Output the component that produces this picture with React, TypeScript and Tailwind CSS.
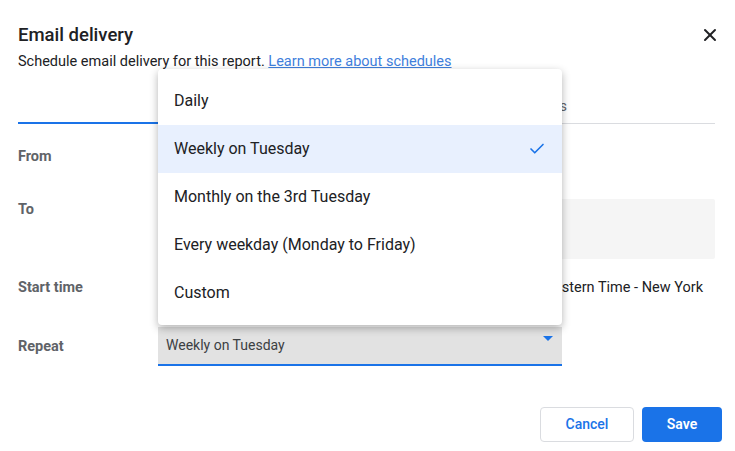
import { Check, X } from 'lucide-react';

const options = ['Daily', 'Weekly on Tuesday', 'Monthly on the 3rd Tuesday', 'Every weekday (Monday to Friday)', 'Custom'];

const Label = ({ children }: { children: string }) => (
    <div className="w-[140px] shrink-0 text-[14.5px] font-bold text-[#5f6368]">{children}</div>
);

export default function App() {
    const selected = 'Weekly on Tuesday';

    return (
        <div className="relative h-[451px] w-[735px] overflow-hidden bg-white font-['Roboto',sans-serif] text-[#202124]">
            <div className="flex flex-col pl-[18px] pr-[20px] pt-[24px]">
                {/* header */}
                <div className="flex items-center justify-between">
                    <h1 className="text-[18.5px] leading-[22px] font-medium">Email delivery</h1>
                    <button className="-mr-[5px] text-[#202124]">
                        <X size={20} strokeWidth={2.4} />
                    </button>
                </div>
                <p className="mt-[6px] text-[14.5px] leading-[20px]">
                    Schedule email delivery for this report.{' '}
                    <a className="text-[#3f7fdc] underline">Learn more about schedules</a>
                </p>

                {/* tabs */}
                <div className="mt-[18px] flex h-[34px] w-[697px] border-b border-[#dadce0]">
                    <div className="-mb-px w-[352px] border-b-2 border-[#1a73e8] text-center text-[14.5px] leading-[34px] text-[#1a73e8]">
                        Schedule
                    </div>
                    <div className="w-[200px] pr-[3px] text-right text-[14.5px] leading-[34px] text-[#5f6368]">
                        Existing schedules
                    </div>
                </div>

                {/* form */}
                <div className="mt-[17px] flex h-[32px] items-center">
                    <Label>From</Label>
                    <div className="text-[14.5px]">reports@example.com</div>
                </div>
                <div className="mt-[26px] flex items-start">
                    <Label>To</Label>
                    <div className="h-[60px] w-[557px] rounded-[2px] bg-[#f5f5f5]" />
                </div>
                <div className="mt-[13px] flex h-[32px] items-center">
                    <Label>Start time</Label>
                    <div className="flex w-[557px] items-center justify-between pr-[12px] text-[14.5px]">
                        <span>9:00 AM</span>
                        <span>(GMT-05:00) Eastern Time - New York</span>
                    </div>
                </div>
                <div className="mt-[23px] flex items-center">
                    <Label>Repeat</Label>
                    <div className="relative flex h-[39px] w-[404px] items-center border-b-2 border-[#1a73e8] bg-[#e2e2e2] pl-[8px] text-[14px] text-[#3c4043]">
                        Weekly on Tuesday
                        <span className="absolute right-[9px] top-[9px] h-0 w-0 border-l-[5px] border-r-[5px] border-t-[5px] border-l-transparent border-r-transparent border-t-[#1a73e8]" />
                    </div>
                </div>

                {/* actions */}
                <div className="mt-[41px] flex justify-end gap-[8px]">
                    <button className="h-[35px] w-[94px] rounded-[4px] border border-[#dadce0] text-[14px] font-medium text-[#1a73e8]">
                        Cancel
                    </button>
                    <button className="-mr-[7px] h-[35px] w-[80px] rounded-[4px] bg-[#1a73e8] text-[14px] font-semibold text-white">
                        Save
                    </button>
                </div>
            </div>

            {/* dropdown menu */}
            <div className="absolute left-[158px] top-[69px] w-[404px] rounded-[4px] bg-white py-[8px] shadow-[0_3px_8px_rgba(0,0,0,0.3)]">
                {options.map(option => (
                    <div
                        key={option}
                        className={`flex h-[48px] items-center justify-between pl-[16px] pr-[16px] text-[16px] ${option === selected ? 'bg-[#e8f0fe]' : ''}`}
                    >
                        <span>{option}</span>
                        {option === selected && <Check size={18} strokeWidth={2.2} className="text-[#1a73e8]" />}
                    </div>
                ))}
            </div>
        </div>
    );
}
